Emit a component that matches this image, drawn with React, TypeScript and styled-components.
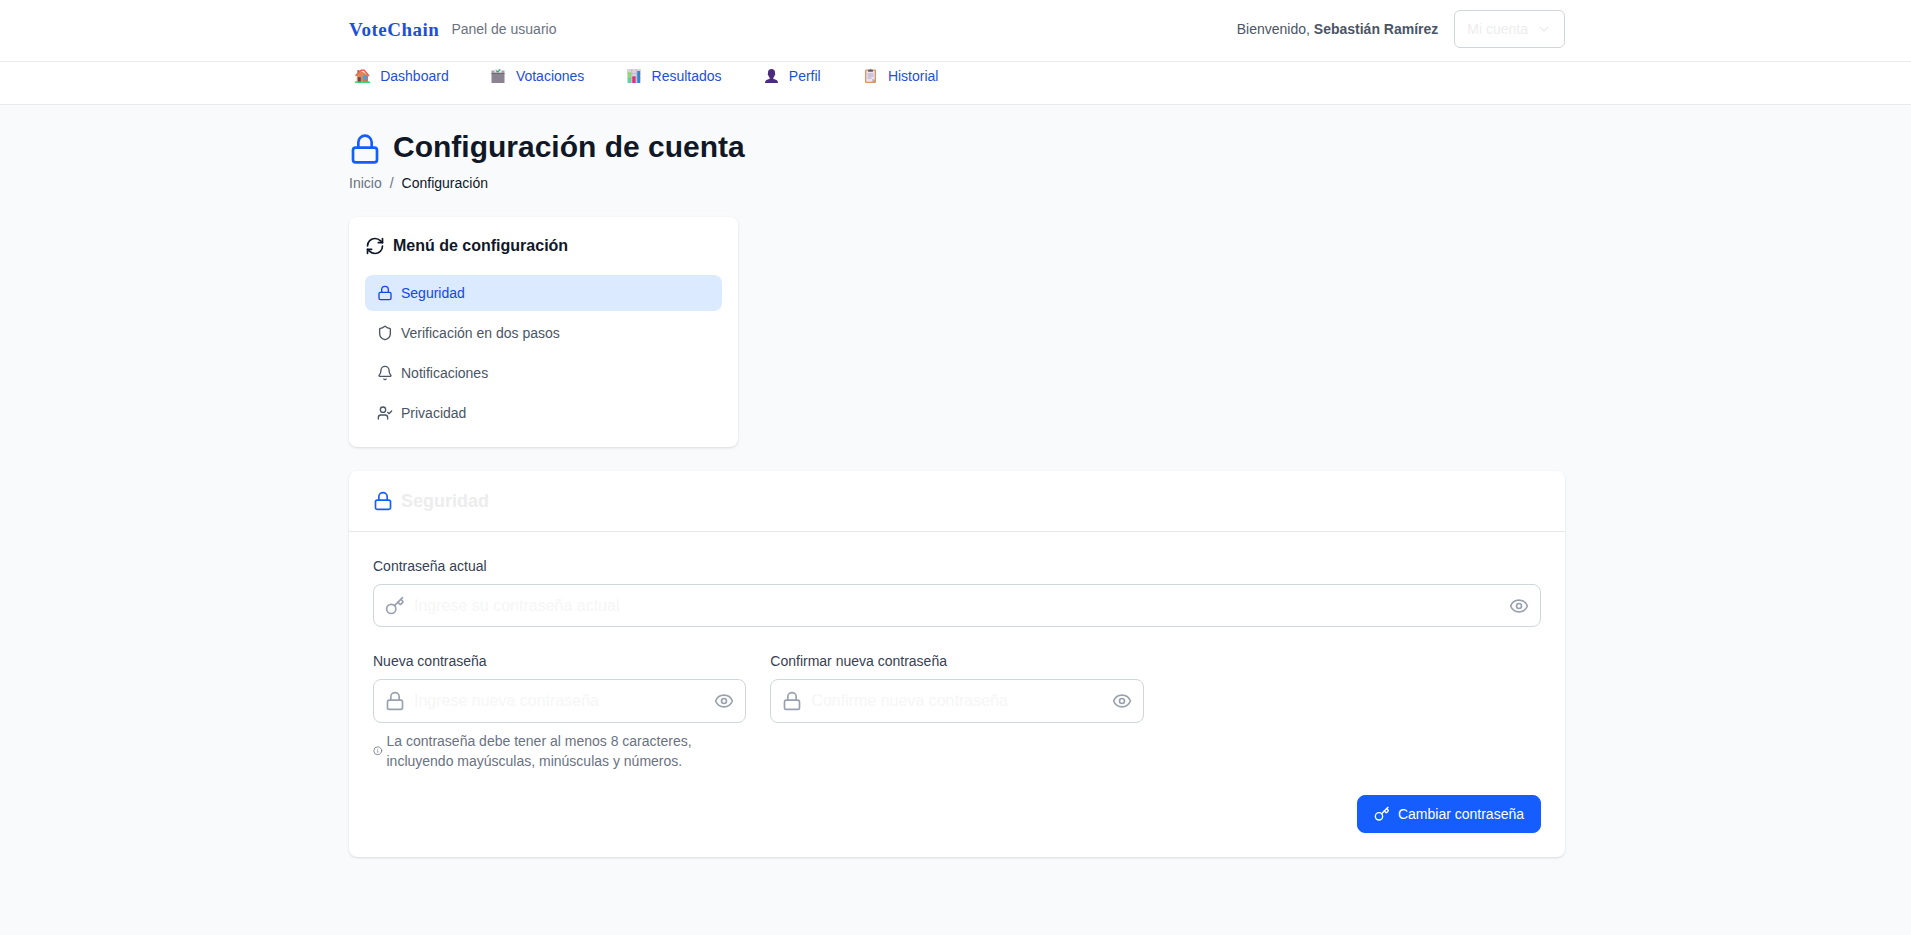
import React from 'react';
import styled, { createGlobalStyle, css } from 'styled-components';
import { Bell, ChevronDown, Eye, Info, Key, Lock, RefreshCw, Shield, UserCheck } from 'lucide-react';

const GlobalStyle = createGlobalStyle`
  *, *::before, *::after { box-sizing: border-box; }
  html, body { margin: 0; padding: 0; }
  body {
    background: #f9fafc;
    color: #ededed;
    font-family: "Liberation Sans", Arial, Helvetica, sans-serif;
    font-size: 16px;
    line-height: 24px;
  }
  h1, h2, p, ul { margin: 0; padding: 0; }
  svg { display: block; flex-shrink: 0; }
`;

const Page = styled.div`
  min-height: 935px;
`;

const Container = styled.div`
  width: 1216px;
  margin: 0 auto;
`;

const Bar = styled.div`
  background: #fff;
  border-bottom: 1px solid #ebebed;
  padding-left: 3px;
`;

const HeaderRow = styled(Container)`
  display: flex;
  justify-content: space-between;
  align-items: center;
  padding: 10px 0 13px;
`;

const Brand = styled.div`
  display: flex;
  align-items: center;
  gap: 12px;
`;

const Logo = styled.span`
  padding-top: 2px;
  font-family: "Liberation Serif", "Times New Roman", serif;
  font-weight: 700;
  font-size: 19px;
  letter-spacing: 0.5px;
  line-height: 26px;
  color: #1d50d8;
`;

const Subtitle = styled.span`
  font-size: 14px;
  line-height: 20px;
  color: #6a7282;
`;

const Account = styled.div`
  display: flex;
  align-items: center;
  gap: 16px;
`;

const Welcome = styled.span`
  font-size: 14px;
  line-height: 20px;
  color: #4a5565;
`;

const AccountButton = styled.button`
  display: flex;
  align-items: center;
  gap: 8px;
  height: 38px;
  padding: 0 12px;
  border: 1px solid #d1d5dc;
  border-radius: 6px;
  background: #fff;
  color: #ededed;
  font: 14px/20px "Liberation Sans", Arial, sans-serif;
`;

const NavRow = styled(Container)`
  display: flex;
  gap: 32px;
  height: 42px;
  padding-top: 4px;
`;

const NavLink = styled.a`
  display: flex;
  align-items: center;
  gap: 8px;
  height: 20px;
  padding: 0 4px;
  font-size: 14px;
  line-height: 20px;
  color: #1d50d8;
`;

const Emoji = styled.span`
  display: flex;
  justify-content: center;
  width: 19.2px;
`;

const Main = styled.main`
  padding-left: 3px;
`;

const Content = styled(Container)`
  padding-top: 24px;
`;

const Title = styled.h1`
  display: flex;
  align-items: center;
  gap: 12px;
  font-size: 30px;
  line-height: 36px;
  font-weight: 700;
  color: #101828;
  svg { color: #155dfc; margin-top: 4px; }
`;

const Breadcrumb = styled.div`
  display: flex;
  gap: 8px;
  margin-top: 8px;
  font-size: 14px;
  line-height: 20px;
  color: #6a7282;
`;

const Current = styled.span`
  color: #101828;
`;

const card = css`
  background: #fff;
  border-radius: 8px;
  box-shadow: 0 1px 3px rgba(0, 0, 0, 0.1), 0 1px 2px -1px rgba(0, 0, 0, 0.1);
`;

const MenuCard = styled.section`
  ${card}
  width: 389px;
  margin-top: 24px;
  padding: 16px;
`;

const MenuTitle = styled.h2`
  display: flex;
  align-items: center;
  gap: 8px;
  height: 26px;
  margin-bottom: 16px;
  font-size: 16px;
  line-height: 24px;
  color: #101828;
`;

const MenuList = styled.nav`
  display: flex;
  flex-direction: column;
  gap: 4px;
`;

const MenuItem = styled.a<{ $active?: boolean }>`
  display: flex;
  align-items: center;
  gap: 8px;
  height: 36px;
  padding: 0 12px;
  border-radius: 8px;
  font-size: 14px;
  line-height: 20px;
  color: ${(p) => (p.$active ? '#1447e6' : '#4a5565')};
  background: ${(p) => (p.$active ? '#dbeafe' : 'transparent')};
`;

const Panel = styled.section`
  ${card}
  margin-top: 24px;
`;

const PanelHeader = styled.h2`
  display: flex;
  align-items: center;
  gap: 8px;
  height: 61px;
  padding: 0 24px;
  border-bottom: 1px solid #e5e7eb;
  font-size: 18px;
  line-height: 28px;
  color: #ededed;
  svg { color: #155dfc; }
`;

const Form = styled.form`
  display: flex;
  flex-direction: column;
  gap: 24px;
  padding: 24px;
`;

const FieldGrid = styled.div`
  display: grid;
  grid-template-columns: repeat(3, 1fr);
  column-gap: 24px;
`;

const Label = styled.label`
  display: block;
  margin-bottom: 8px;
  font-size: 14px;
  line-height: 20px;
  color: #364153;
`;

const InputBox = styled.div<{ $height: number }>`
  display: flex;
  align-items: center;
  gap: 9px;
  height: ${(p) => p.$height}px;
  padding: 0 11px;
  border: 1px solid #d1d5dc;
  border-radius: 8px;
  color: #99a1af;
`;

const Input = styled.input`
  flex: 1;
  min-width: 0;
  padding: 0;
  border: 0;
  outline: 0;
  background: transparent;
  font: 16px/24px "Liberation Sans", Arial, sans-serif;
  &::placeholder { color: #f6f6f6; opacity: 1; }
`;

const Hint = styled.div`
  display: flex;
  align-items: center;
  gap: 4px;
  margin-top: 8px;
  font-size: 14px;
  line-height: 20px;
  color: #6a7282;
`;

const Actions = styled.div`
  display: flex;
  justify-content: flex-end;
`;

const SubmitButton = styled.button`
  display: flex;
  align-items: center;
  gap: 8px;
  height: 38px;
  padding: 0 16px;
  border: 1px solid #155dfc;
  border-radius: 8px;
  background: #155dfc;
  box-shadow: 0 1px 2px rgba(0, 0, 0, 0.05);
  color: #fff;
  font: 14px/20px "Liberation Sans", Arial, sans-serif;
`;

const HouseIcon = () => (
  <svg width="15" height="14" viewBox="0 0 15 14">
    <path d="M0 12.4h15V14H0z" fill="#3bd477" />
    <path d="M1.8 6 6.5 2l6.3 4v6.8h-11z" fill="#d98a55" />
    <path d="M9 5.5 13 7v5.8H8z" fill="#c87850" />
    <path d="M2.4 1h2v3h-2z" fill="#b5604c" />
    <path d="M.5 6.8 6.2 1.2h3L14 7" fill="none" stroke="#e8604a" strokeWidth="1.5" />
    <path d="M3 8.2h2.8v4.4H3z" fill="#6b4652" />
    <path d="M8.2 6.7h3.4v3.2H8.2z" fill="#3ba5e8" />
  </svg>
);

const BallotIcon = () => (
  <svg width="14" height="14" viewBox="0 0 14 14">
    <path d="M3.6 0h6.8v4H3.6z" fill="#e4e6ea" />
    <path d="m5.2 1.7 1.4 1.4L9.2.4" fill="none" stroke="#29a56c" strokeWidth="1.2" />
    <path d="M.5 1.6h3v2h7v-2h3V5H.5z" fill="#a49eab" />
    <path d="M.5 4.6h13V14H.5z" fill="#8b8392" />
    <path d="M.5 4h13v1H.5z" fill="#716a79" />
  </svg>
);

const ChartIcon = () => (
  <svg width="14" height="14" viewBox="0 0 14 14">
    <rect width="14" height="14" rx=".8" fill="#d9d0e0" />
    <path d="M0 4.5h14M0 9h14M4.7 0v14M9.4 0v14" stroke="#b8afc2" strokeWidth=".6" />
    <path d="M1 3.2h3V14H1z" fill="#8bdc6a" />
    <path d="M1 9h3v5H1z" fill="#55d8a0" />
    <path d="M5.3 7.3h3.3V14H5.3z" fill="#dc3272" />
    <path d="M10.2 2h2.8v12h-2.8z" fill="#2d87d8" />
  </svg>
);

const PersonIcon = () => (
  <svg width="13" height="14" viewBox="0 0 13 14">
    <path
      d="M6.5 0C4.3 0 3 1.4 3 3.3v1.2c-.5.3-.3 1.6.3 1.8.3 1.2.8 2 1.4 2.4v1.1L1.5 11C.5 11.6.1 12.5 0 14h13c-.1-1.5-.5-2.4-1.5-3L8.3 9.8V8.7c.6-.4 1.1-1.2 1.4-2.4.6-.2.8-1.5.3-1.8V3.3C10 1.4 8.7 0 6.5 0z"
      fill="#4b2b7b"
    />
  </svg>
);

const ClipboardIcon = () => (
  <svg width="11" height="14" viewBox="0 0 11 14">
    <rect y=".4" width="11" height="13.6" rx="1" fill="#dc9466" />
    <path d="M1.3 1.8h8.4v8.4l-2.5 2.5H1.3z" fill="#e9e1f0" />
    <path d="M9.7 10.2H7.2v2.5z" fill="#bdaeca" />
    <path d="M3.1.8h1.2C4.4 0 6.6 0 6.7.8h1.2v2H3.1z" fill="#665d70" />
    <path d="M2.5 5h6M2.5 7h6M2.5 9h4" stroke="#a49bad" strokeWidth=".8" />
  </svg>
);

const navItems = [
  { label: 'Dashboard', Icon: HouseIcon },
  { label: 'Votaciones', Icon: BallotIcon },
  { label: 'Resultados', Icon: ChartIcon },
  { label: 'Perfil', Icon: PersonIcon },
  { label: 'Historial', Icon: ClipboardIcon },
];

const menuItems = [
  { label: 'Seguridad', Icon: Lock },
  { label: 'Verificación en dos pasos', Icon: Shield },
  { label: 'Notificaciones', Icon: Bell },
  { label: 'Privacidad', Icon: UserCheck },
];

type FieldProps = {
  id: string;
  label: string;
  placeholder: string;
  Icon: typeof Lock;
  height?: number;
  hint?: React.ReactNode;
};

const PasswordField = ({ id, label, placeholder, Icon, height = 44, hint }: FieldProps) => (
  <div>
    <Label htmlFor={id}>{label}</Label>
    <InputBox $height={height}>
      <Icon size={20} />
      <Input id={id} type="password" placeholder={placeholder} />
      <Eye size={20} />
    </InputBox>
    {hint && (
      <Hint>
        <Info size={9.5} />
        <span>{hint}</span>
      </Hint>
    )}
  </div>
);

export default function App() {
  return (
    <Page>
      <GlobalStyle />
      <Bar as="header">
        <HeaderRow>
          <Brand>
            <Logo>VoteChain</Logo>
            <Subtitle>Panel de usuario</Subtitle>
          </Brand>
          <Account>
            <Welcome>
              Bienvenido, <strong>Sebastián Ramírez</strong>
            </Welcome>
            <AccountButton>
              Mi cuenta
              <ChevronDown size={16} />
            </AccountButton>
          </Account>
        </HeaderRow>
      </Bar>
      <Bar as="nav">
        <NavRow>
          {navItems.map(({ label, Icon }) => (
            <NavLink key={label}>
              <Emoji>
                <Icon />
              </Emoji>
              {label}
            </NavLink>
          ))}
        </NavRow>
      </Bar>
      <Main>
        <Content>
          <Title>
            <Lock size={32} />
            Configuración de cuenta
          </Title>
          <Breadcrumb>
            <span>Inicio</span>
            <span>/</span>
            <Current>Configuración</Current>
          </Breadcrumb>
          <MenuCard>
            <MenuTitle>
              <RefreshCw size={20} />
              Menú de configuración
            </MenuTitle>
            <MenuList>
              {menuItems.map(({ label, Icon }, i) => (
                <MenuItem key={label} $active={i === 0}>
                  <Icon size={16} />
                  {label}
                </MenuItem>
              ))}
            </MenuList>
          </MenuCard>
          <Panel>
            <PanelHeader>
              <Lock size={20} />
              Seguridad
            </PanelHeader>
            <Form>
              <PasswordField
                id="actual"
                label="Contraseña actual"
                placeholder="Ingrese su contraseña actual"
                Icon={Key}
                height={43}
              />
              <FieldGrid>
                <PasswordField
                  id="nueva"
                  label="Nueva contraseña"
                  placeholder="Ingrese nueva contraseña"
                  Icon={Lock}
                  hint={
                    <>
                      La contraseña debe tener al menos 8 caracteres,
                      <br />
                      incluyendo mayúsculas, minúsculas y números.
                    </>
                  }
                />
                <PasswordField
                  id="confirmar"
                  label="Confirmar nueva contraseña"
                  placeholder="Confirme nueva contraseña"
                  Icon={Lock}
                />
              </FieldGrid>
              <Actions>
                <SubmitButton type="button">
                  <Key size={16} />
                  Cambiar contraseña
                </SubmitButton>
              </Actions>
            </Form>
          </Panel>
        </Content>
      </Main>
    </Page>
  );
}
